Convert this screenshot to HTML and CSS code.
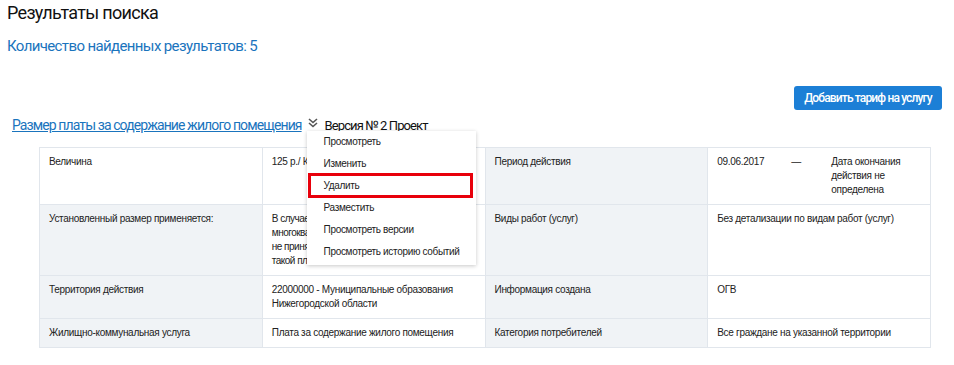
FILE: index.html
```html
<!DOCTYPE html>
<html lang="ru">
<head>
  <meta charset="UTF-8" />
  <title>Результаты поиска</title>
  <link rel="stylesheet" href="styles.css">
</head>
<body>
  <div class="page">
    <h1>Результаты поиска</h1>
    <div class="count">Количество найденных результатов: 5</div>

    <div class="actions">
      <button class="add-btn">Добавить тариф на услугу</button>
    </div>

    <div class="result-head">
      <a href="#" class="result-link">Размер платы за содержание жилого помещения</a>
      <div class="version">
        <svg class="chevron" width="10" height="10" viewBox="0 0 10 10">
          <path d="M1 1 L5 4.5 L9 1 M1 5 L5 8.5 L9 5" fill="none" stroke="#555" stroke-width="1.6"/>
        </svg>
        <span>Версия № 2 Проект</span>
        <!-- Actions menu -->
        <ul class="menu">
          <li>Просмотреть</li>
          <li>Изменить</li>
          <li class="selected">Удалить</li>
          <li>Разместить</li>
          <li>Просмотреть версии</li>
          <li>Просмотреть историю событий</li>
        </ul>
      </div>
    </div>

    <table class="details">
      <tr>
        <td class="label plain">Величина</td>
        <td>125 р./ Кв.м</td>
        <td class="label">Период действия</td>
        <td>
          <div class="period">
            <span class="date">09.06.2017</span>
            <span class="dash">—</span>
            <span class="end">Дата окончания действия не определена</span>
          </div>
        </td>
      </tr>
      <tr>
        <td class="label">Установленный размер применяется:</td>
        <td class="lines">В случае, если собственники помещений в<br>многоквартирном доме на их общем собрании<br>не приняли решение об установлении размера<br>такой платы</td>
        <td class="label">Виды работ (услуг)</td>
        <td>Без детализации по видам работ (услуг)</td>
      </tr>
      <tr>
        <td class="label">Территория действия</td>
        <td>22000000 - Муниципальные образования Нижегородской области</td>
        <td class="label">Информация создана</td>
        <td>ОГВ</td>
      </tr>
      <tr>
        <td class="label">Жилищно-коммунальная услуга</td>
        <td>Плата за содержание жилого помещения</td>
        <td class="label">Категория потребителей</td>
        <td>Все граждане на указанной территории</td>
      </tr>
    </table>
  </div>
</body>
</html>
```

FILE: styles.css
```css
body {
  margin: 0;
  background: #fff;
  font-family: Roboto, Arial, sans-serif;
  color: #111;
}
.page {
  padding: 0 12px 0 7px;
}
h1 {
  margin: 0;
  padding-top: 1px;
  font-size: 18px;
  font-weight: 400;
  line-height: 24px;
  letter-spacing: -0.7px;
  color: #111;
}
.count {
  margin-top: 11px;
  font-size: 15px;
  line-height: 20px;
  letter-spacing: -0.62px;
  color: #1a74bd;
}
.actions {
  display: flex;
  justify-content: flex-end;
  margin-top: 30px;
}
.add-btn {
  background: #1c7fd6;
  color: #fff;
  border: none;
  border-radius: 3px;
  height: 24px;
  width: 148px;
  padding: 0;
  font-family: Roboto, Arial, sans-serif;
  font-size: 12px;
  font-weight: 500;
  letter-spacing: -0.85px;
}
.result-head {
  display: flex;
  align-items: center;
  margin: 5px 0 0 5px;
  height: 20px;
}
.result-link {
  font-size: 14px;
  letter-spacing: -0.9px;
  color: #1a74bd;
  text-decoration: underline;
}
.version {
  position: relative;
  display: flex;
  align-items: center;
  margin-left: 6px;
  font-size: 13px;
  letter-spacing: -0.9px;
  color: #111;
}
.chevron {
  margin-right: 7px;
  margin-top: -4px;
}
.menu {
  position: absolute;
  left: -1px;
  top: 13px;
  width: 169px;
  margin: 0;
  padding: 0 0 2px;
  list-style: none;
  background: #fff;
  box-shadow: 0 1px 4px rgb(0 0 0 / 0.22);
  z-index: 2;
  letter-spacing: -0.33px;
}
.menu li {
  position: relative;
  height: 22px;
  line-height: 22px;
  padding-left: 17px;
  font-family: "Liberation Sans", Arial, sans-serif;
  font-size: 10px;
  color: #222;
}
.menu li.selected::after {
  content: "";
  position: absolute;
  left: 1px;
  right: 3px;
  top: -2px;
  bottom: -1px;
  border: 3px solid #e8000b;
}
.details {
  margin: 12px 0 0 32px;
  width: 892px;
  border-collapse: collapse;
  border: 1px solid #e1e6ec;
  font-family: "Liberation Sans", Arial, sans-serif;
  font-size: 10px;
  letter-spacing: -0.3px;
  color: #222;
}
.details td {
  width: 25%;
  vertical-align: top;
  border: 1px solid #e1e6ec;
  padding: 7px 9px;
  line-height: 14px;
}
.details td.lines {
  white-space: nowrap;
  letter-spacing: -0.5px;
}
.details td.label {
  background: #f0f3f6;
}
.details td.label.plain {
  background: #fff;
}
.period {
  display: flex;
}
.date {
  width: 74px;
}
.dash {
  width: 40px;
}
.end {
  width: 80px;
}
```
